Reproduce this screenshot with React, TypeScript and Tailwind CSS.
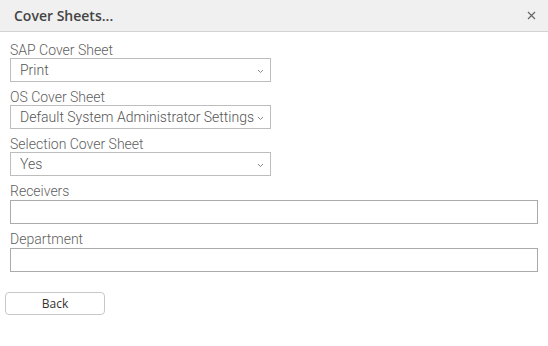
import React from "react";

function Chevron() {
  return (
    <svg width="7" height="5" viewBox="0 0 7 5" className="absolute right-[6px] top-[10px]">
      <path d="M1 1 L3.5 3.5 L6 1" fill="none" stroke="#8a8a8a" strokeWidth="1" />
    </svg>
  );
}

function SelectField({ label, value }: { label: string; value: string }) {
  return (
    <div className="flex flex-col">
      <div className="h-[16px] text-[14px] leading-[16px] text-[#606060] font-light">{label}</div>
      <div className="relative w-[261px] h-[24px] border border-[#bdbdbd] bg-white">
        <div className="pl-[9px] pr-[14px] text-[14px] leading-[22px] text-[#555] font-light whitespace-nowrap overflow-hidden">{value}</div>
        <Chevron />
      </div>
    </div>
  );
}

function TextField({ label }: { label: string }) {
  return (
    <div className="flex flex-col">
      <div className="h-[17px] text-[14px] leading-[17px] text-[#606060] font-light">{label}</div>
      <div className="w-[528px] h-[24px] border border-[#ababab] bg-white" />
    </div>
  );
}

export default function App() {
  return (
    <div className="w-[548px] h-[346px] bg-white relative" style={{ fontFamily: "Roboto, 'Open Sans', sans-serif" }}>
      <div className="h-[32px] bg-[#f0f0f0] border-b border-[#d2d2d2] flex items-center justify-between pl-[14px] pr-[12px]">
        <div className="text-[14px] font-semibold text-[#444] leading-[18px]" style={{ fontFamily: "'Open Sans', sans-serif" }}>
          Cover Sheets...
        </div>
        <svg width="9" height="9" viewBox="0 0 9 9">
          <path d="M1 1 L8 8 M8 1 L1 8" stroke="#666" strokeWidth="1.2" />
        </svg>
      </div>
      <div className="pl-[10px] pt-[10px] flex flex-col gap-[7px]">
        <SelectField label="SAP Cover Sheet" value="Print" />
        <SelectField label="OS Cover Sheet" value="Default System Administrator Settings" />
        <SelectField label="Selection Cover Sheet" value="Yes" />
        <TextField label="Receivers" />
        <TextField label="Department" />
      </div>
      <div className="pl-[5px] pt-[19px]">
        <button className="w-[100px] h-[23px] border border-[#c8c8c8] rounded-[4px] bg-white text-[12px] text-[#333] leading-[21px]" style={{ fontFamily: "'Open Sans', sans-serif" }}>
          Back
        </button>
      </div>
    </div>
  );
}
